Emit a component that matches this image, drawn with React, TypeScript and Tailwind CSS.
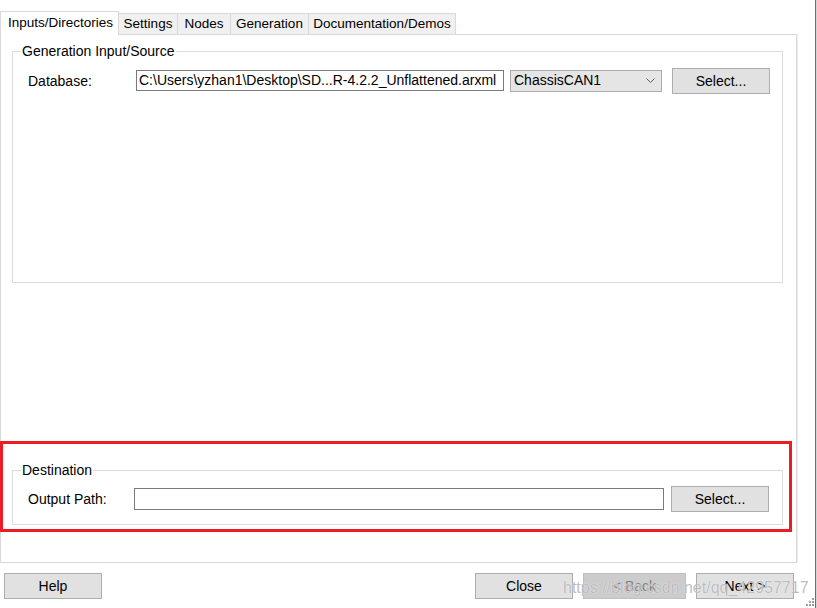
import React from 'react';

const FONT = { fontFamily: '"Liberation Sans", Arial, sans-serif' };

function Button({ label, disabled = false, className = '' }: { label: string; disabled?: boolean; className?: string }) {
  return (
    <button
      type="button"
      className={
        'flex items-center justify-center border text-[14px] leading-none ' +
        (disabled
          ? 'bg-[#cccccc] border-[#bfbfbf] text-[#838383] '
          : 'bg-[#e1e1e1] border-[#adadad] text-black ') +
        className
      }
    >
      {label}
    </button>
  );
}

const tabs = ['Settings', 'Nodes', 'Generation', 'Documentation/Demos'];
const tabWidths = ['w-[59px]', 'w-[53px]', 'w-[78px]', 'w-[147px]'];

export default function App() {
  return (
    <div className="relative flex w-[817px] h-[608px] overflow-hidden bg-white text-black" style={FONT}>
      <div className="flex flex-col w-[815px] h-full">
        {/* tab strip */}
        <div className="flex items-end h-[34px]">
          <div className="flex items-center h-[24px] w-[119px] pl-[7px] border border-b-0 border-[#d9d9d9] bg-white text-[13.5px] -mb-px z-10">
            Inputs/Directories
          </div>
          {tabs.map((t, i) => (
            <div
              key={t}
              className={
                'flex items-center justify-center h-[21px] border border-b-0 border-l-0 border-[#d9d9d9] bg-[#f0f0f0] text-[13.5px] ' +
                tabWidths[i]
              }
            >
              {t}
            </div>
          ))}
        </div>

        {/* tab page */}
        <div className="flex flex-col w-[797px] h-[529px] border border-[#d9d9d9] shadow-[1px_0_0_#ececec]">
          <fieldset className="mt-[8px] ml-[11px] w-[771px] h-[240px] border border-[#dcdcdc] pl-[8px]">
            <legend className="px-px text-[14px] leading-[16px]">Generation Input/Source</legend>
            <div className="flex items-center mt-[9px] h-[25px]">
              <span className="ml-[7px] w-[108px] text-[14px] pt-[2px]">Database:</span>
              <div className="flex items-center h-[21px] w-[368px] border border-[#7a7a7a] bg-white px-[2px] text-[14px] whitespace-nowrap overflow-hidden">
                C:\Users\yzhan1\Desktop\SD...R-4.2.2_Unflattened.arxml
              </div>
              <div className="flex items-center justify-between ml-[6px] h-[22px] w-[152px] border border-[#acacac] bg-[#e5e5e5] pl-[3px] pr-[6px] text-[14px]">
                <span>ChassisCAN1</span>
                <svg width="9" height="6" viewBox="0 0 9 6">
                  <polyline points="0.5,0.5 4.5,4.5 8.5,0.5" fill="none" stroke="#606060" strokeWidth="1" />
                </svg>
              </div>
              <Button label="Select..." className="ml-[10px] w-[98px] h-[26px]" />
            </div>
          </fieldset>

          <div className="flex-1" />

          <fieldset className="mb-[37px] ml-[11px] w-[771px] h-[63px] border border-[#dcdcdc] pl-[8px]">
            <legend className="px-px text-[14px] leading-[16px]">Destination</legend>
            <div className="flex items-center mt-[8px] h-[26px]">
              <span className="ml-[7px] w-[106px] text-[14px] pt-[1px]">Output Path:</span>
              <div className="h-[22px] w-[530px] border border-[#7a7a7a] bg-white" />
              <Button label="Select..." className="ml-[7px] w-[98px] h-[26px]" />
            </div>
          </fieldset>
        </div>

        {/* bottom buttons */}
        <div className="flex items-center mt-[10px] h-[26px]">
          <Button label="Help" className="ml-[4px] w-[98px] h-[26px]" />
          <div className="flex-1" />
          <Button label="Close" className="w-[98px] h-[26px]" />
          <Button label="< Back" disabled className="ml-[10px] w-[103px] h-[26px]" />
          <Button label="Next >" className="ml-[10px] w-[98px] h-[26px] mr-[21px]" />
        </div>
      </div>

      {/* window edge */}
      <div className="flex h-full">
        <div className="w-px h-full bg-[#6e6e6e]" />
        <div className="w-px h-full bg-[#d4d4d4]" />
      </div>

      {/* red annotation */}
      <div className="absolute left-0 top-[441px] w-[792px] h-[91px] border-[3px] border-[#ed1c24] pointer-events-none" />

      {/* resize grip */}
      <svg className="absolute left-[804px] top-[596px]" width="10" height="10" viewBox="0 0 10 10">
        {[
          [8, 2], [8, 5], [5, 5], [8, 8], [5, 8], [2, 8],
        ].map(([x, y]) => (
          <rect key={`${x}-${y}`} x={x} y={y} width="2" height="2" fill="#a0a0a0" />
        ))}
      </svg>

      {/* watermark */}
      <div className="absolute left-[563px] top-[578px] text-[16px] leading-[20px] text-[#a8a8a8]/75 whitespace-nowrap pointer-events-none [text-shadow:0_0_1px_#ffffff]">
        https://blog.csdn.net/qq_42957717
      </div>
    </div>
  );
}
